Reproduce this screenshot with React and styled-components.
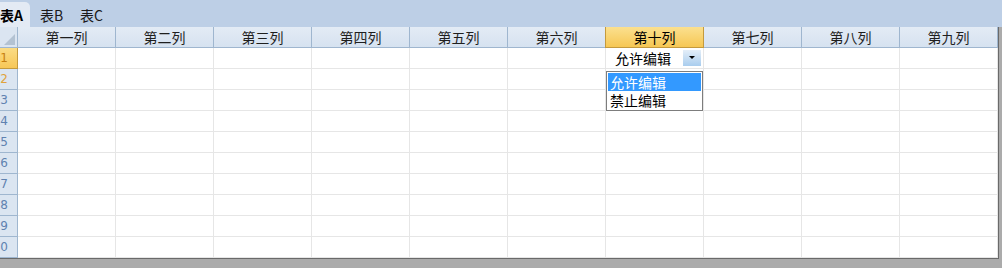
import React from 'react';
import styled, { createGlobalStyle, css } from 'styled-components';

// sheet geometry
const ROW_H = 21;
const COL_W = 98;
const HEAD_W = 18;

const columns = ['第一列', '第二列', '第三列', '第四列', '第五列', '第六列', '第十列', '第七列', '第八列', '第九列'];
const ACTIVE_COL = 6;
const rows = [1, 2, 3, 4, 5, 6, 7, 8, 9, 10];

const Global = createGlobalStyle`
  html, body {
    margin: 0;
    padding: 0;
    background: #ababab;
  }
  body {
    font-family: "Noto Sans CJK SC", "Liberation Sans", sans-serif;
    font-size: 14px;
  }
`;

const Page = styled.div`
  width: 1002px;
  height: 268px;
  overflow: hidden;
  background: #ababab;
  position: relative;
`;

const TabBar = styled.div`
  height: 27px;
  background: #bdcfe6;
  display: flex;
  align-items: flex-end;
  gap: 12px;
`;

const Tab = styled.div`
  height: 25px;
  display: flex;
  align-items: center;
  font-size: 14px;
  color: #1a1a1a;
  min-width: 28px;
  ${(p) =>
    p.active &&
    css`
      background: #e3eaf4;
      border-top-right-radius: 5px;
      font-weight: bold;
      color: #000;
      padding-right: 2px;
      margin-right: -2px;
    `}
`;

const Sheet = styled.div`
  width: ${HEAD_W + COL_W * 10}px;
  background: #fff;
  border-right: 1px solid #6a6a6a;
  border-bottom: 1px solid #6a6a6a;
  display: grid;
  grid-template-columns: ${HEAD_W}px repeat(10, ${COL_W}px);
  grid-auto-rows: ${ROW_H}px;
  position: relative;
`;

const Corner = styled.div`
  box-sizing: border-box;
  background: #dbe5f1;
  border-right: 1px solid #9fb6cf;
  border-bottom: 1px solid #9fb6cf;
  position: relative;
  &::after {
    content: '';
    position: absolute;
    right: 2px;
    bottom: 2px;
    border-style: solid;
    border-width: 0 0 11px 11px;
    border-color: transparent transparent #b3c2d2 transparent;
  }
`;

const ColHead = styled.div`
  box-sizing: border-box;
  display: flex;
  align-items: center;
  justify-content: center;
  color: #1f1f1f;
  background: linear-gradient(#e3ebf5, #d6e2f0);
  border-right: 1px solid #9fb6cf;
  border-bottom: 1px solid #9fb6cf;
  ${(p) =>
    p.active &&
    css`
      background: linear-gradient(#fbe08f, #f6c754);
      border-right-color: #c49a3d;
      border-bottom-color: #c49a3d;
      border-left: 1px solid #c49a3d;
      margin-left: -1px;
      color: #000;
    `}
`;

const RowHead = styled.div`
  box-sizing: border-box;
  overflow: hidden;
  white-space: nowrap;
  display: flex;
  align-items: center;
  justify-content: flex-end;
  padding-right: 9px;
  font-family: "DejaVu Sans", sans-serif;
  font-size: 12px;
  color: ${(p) => (p.hint ? '#e0a23c' : '#5f82b0')};
  background: #dbe5f1;
  border-right: 1px solid #9fb6cf;
  border-bottom: 1px solid #9fb6cf;
  ${(p) =>
    p.active &&
    css`
      background: linear-gradient(#fbdc85, #f7c757);
      border-right-color: #c49a3d;
      border-bottom-color: #c49a3d;
      color: #c77f10;
    `}
`;

const Cell = styled.div`
  box-sizing: border-box;
  border-right: 1px solid #e6e6e6;
  border-bottom: 1px solid #e6e6e6;
  position: relative;
`;

const Editor = styled.div`
  position: absolute;
  inset: 0;
  display: flex;
  align-items: center;
  justify-content: space-between;
  padding: 0 2px 1px 9px;
  color: #000;
`;

const DropButton = styled.div`
  width: 18px;
  height: 16px;
  background: linear-gradient(#e4eef8, #a9cdee);
  display: flex;
  align-items: center;
  justify-content: center;
  &::after {
    content: '';
    border-style: solid;
    border-width: 3px 3px 0 3px;
    border-color: #000 transparent transparent transparent;
  }
`;

const ListBox = styled.div`
  position: absolute;
  left: ${HEAD_W + COL_W * ACTIVE_COL}px;
  top: ${ROW_H * 2 + 2}px;
  width: 97px;
  box-sizing: border-box;
  background: #fff;
  border: 1px solid #7d7d7d;
  padding: 1px;
  display: flex;
  flex-direction: column;
  z-index: 2;
`;

const Option = styled.div`
  height: 18px;
  line-height: 18px;
  padding-left: 2px;
  overflow: hidden;
  color: ${(p) => (p.selected ? '#fff' : '#000')};
  background: ${(p) => (p.selected ? '#3399ff' : 'transparent')};
`;

export default function App() {
  return (
    <Page>
      <Global />
      <TabBar>
        <Tab active>表A</Tab>
        <Tab>表B</Tab>
        <Tab>表C</Tab>
      </TabBar>
      <Sheet>
        <Corner />
        {columns.map((c, i) => (
          <ColHead key={c} active={i === ACTIVE_COL}>
            {c}
          </ColHead>
        ))}
        {rows.map((r) => (
          <React.Fragment key={r}>
            <RowHead active={r === 1} hint={r === 2}>
              {r}
            </RowHead>
            {columns.map((c, i) => (
              <Cell key={c}>
                {r === 1 && i === ACTIVE_COL && (
                  <Editor>
                    <span>允许编辑</span>
                    <DropButton />
                  </Editor>
                )}
              </Cell>
            ))}
          </React.Fragment>
        ))}
        <ListBox>
          <Option selected>允许编辑</Option>
          <Option>禁止编辑</Option>
        </ListBox>
      </Sheet>
    </Page>
  );
}
